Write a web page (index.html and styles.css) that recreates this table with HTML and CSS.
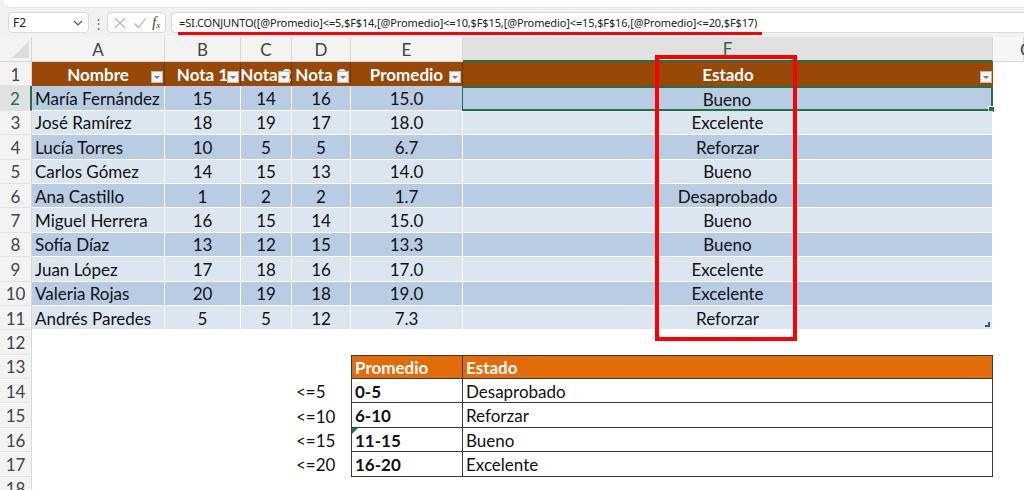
FILE: index.html
```html
<!DOCTYPE html>
<html lang="es">
<head>
<meta charset="utf-8">
<title>SI.CONJUNTO</title>
<link rel="stylesheet" href="styles.css">
</head>
<body>
<div class="app">
  <div class="ribbon-edge"></div>
  <div class="fbar">
    <div class="namebox"><span>F2</span><svg class="chev" width="10" height="6" viewBox="0 0 10 6"><path d="M1 1l4 4 4-4" fill="none" stroke="#555" stroke-width="1.2"/></svg></div>
    <div class="dots">⋮</div>
    <div class="fbtns">
      <svg width="14" height="14" viewBox="0 0 14 14"><path d="M2 2l10 10M12 2L2 12" stroke="#b4b4b4" stroke-width="1.2"/></svg>
      <svg width="14" height="14" viewBox="0 0 14 14"><path d="M1.5 7.5l4 4 7-9" fill="none" stroke="#b4b4b4" stroke-width="1.2"/></svg>
      <span class="fx">f<sub>x</sub></span>
    </div>
    <div class="formula">=SI.CONJUNTO([@Promedio]&lt;=5,$F$14,[@Promedio]&lt;=10,$F$15,[@Promedio]&lt;=15,$F$16,[@Promedio]&lt;=20,$F$17)</div>
    <div class="underline"></div>
  </div>

  <div class="sheet">
    <!-- column headers -->
    <div class="corner"><span class="tri"></span></div>
    <div class="ch">A</div><div class="ch">B</div><div class="ch">C</div><div class="ch">D</div><div class="ch">E</div><div class="ch sel">F</div><div class="ch gcol">G</div>

    <!-- row 1 -->
    <div class="rh">1</div>
    <div class="hd">Nombre<span class="dd"></span></div>
    <div class="hd">Nota 1<span class="dd"></span></div>
    <div class="hd">Nota 2<span class="dd"></span></div>
    <div class="hd">Nota 3<span class="dd"></span></div>
    <div class="hd">Promedio<span class="dd"></span></div>
    <div class="hd last-hd">Estado<span class="dd"></span></div>
    <div class="c"></div>

    <!-- row 2 -->
    <div class="rh rsel">2</div>
    <div class="t b1 l">María Fernández</div><div class="t b1">15</div><div class="t b1">14</div><div class="t b1">16</div><div class="t b1">15.0</div><div class="t b1 active">Bueno</div><div class="c"></div>

    <div class="rh">3</div>
    <div class="t b2 l">José Ramírez</div><div class="t b2">18</div><div class="t b2">19</div><div class="t b2">17</div><div class="t b2">18.0</div><div class="t b2">Excelente</div><div class="c"></div>

    <div class="rh">4</div>
    <div class="t b1 l">Lucía Torres</div><div class="t b1">10</div><div class="t b1">5</div><div class="t b1">5</div><div class="t b1">6.7</div><div class="t b1">Reforzar</div><div class="c"></div>

    <div class="rh">5</div>
    <div class="t b2 l">Carlos Gómez</div><div class="t b2">14</div><div class="t b2">15</div><div class="t b2">13</div><div class="t b2">14.0</div><div class="t b2">Bueno</div><div class="c"></div>

    <div class="rh">6</div>
    <div class="t b1 l">Ana Castillo</div><div class="t b1">1</div><div class="t b1">2</div><div class="t b1">2</div><div class="t b1">1.7</div><div class="t b1">Desaprobado</div><div class="c"></div>

    <div class="rh">7</div>
    <div class="t b2 l">Miguel Herrera</div><div class="t b2">16</div><div class="t b2">15</div><div class="t b2">14</div><div class="t b2">15.0</div><div class="t b2">Bueno</div><div class="c"></div>

    <div class="rh">8</div>
    <div class="t b1 l">Sofía Díaz</div><div class="t b1">13</div><div class="t b1">12</div><div class="t b1">15</div><div class="t b1">13.3</div><div class="t b1">Bueno</div><div class="c"></div>

    <div class="rh">9</div>
    <div class="t b2 l">Juan López</div><div class="t b2">17</div><div class="t b2">18</div><div class="t b2">16</div><div class="t b2">17.0</div><div class="t b2">Excelente</div><div class="c"></div>

    <div class="rh">10</div>
    <div class="t b1 l">Valeria Rojas</div><div class="t b1">20</div><div class="t b1">19</div><div class="t b1">18</div><div class="t b1">19.0</div><div class="t b1">Excelente</div><div class="c"></div>

    <div class="rh">11</div>
    <div class="t b2 l">Andrés Paredes</div><div class="t b2">5</div><div class="t b2">5</div><div class="t b2">12</div><div class="t b2">7.3</div><div class="t b2 last">Reforzar</div><div class="c"></div>

    <div class="rh">12</div>
    <div class="c"></div><div class="c"></div><div class="c"></div><div class="c"></div><div class="c"></div><div class="c"></div><div class="c"></div>

    <div class="rh">13</div>
    <div class="c"></div><div class="c"></div><div class="c"></div><div class="c"></div>
    <div class="k kh k1">Promedio</div><div class="k kh k2">Estado</div><div class="c"></div>

    <div class="rh">14</div>
    <div class="c"></div><div class="c"></div><div class="c"></div><div class="c lbl">&lt;=5</div>
    <div class="k k1 kb">0-5</div><div class="k k2">Desaprobado</div><div class="c"></div>

    <div class="rh">15</div>
    <div class="c"></div><div class="c"></div><div class="c"></div><div class="c lbl">&lt;=10</div>
    <div class="k k1 kb">6-10</div><div class="k k2">Reforzar</div><div class="c"></div>

    <div class="rh">16</div>
    <div class="c"></div><div class="c"></div><div class="c"></div><div class="c lbl">&lt;=15</div>
    <div class="k k1 kb err">11-15</div><div class="k k2">Bueno</div><div class="c"></div>

    <div class="rh">17</div>
    <div class="c"></div><div class="c"></div><div class="c"></div><div class="c lbl">&lt;=20</div>
    <div class="k k1 kb">16-20</div><div class="k k2">Excelente</div><div class="c"></div>

    <div class="rh">18</div>
    <div class="c"></div><div class="c"></div><div class="c"></div><div class="c"></div><div class="c"></div><div class="c"></div><div class="c"></div>

    <div class="redbox"></div>
  </div>
</div>
</body>
</html>
```

FILE: styles.css
```css
* { box-sizing: border-box; }
html, body { margin: 0; padding: 0; }
body {
  width: 1024px;
  height: 490px;
  overflow: hidden;
  background: #ffffff;
  font-family: Lato, "Liberation Sans", sans-serif;
  color: #111;
}
.app {
  position: relative;
  width: 1024px;
  height: 490px;
  overflow: hidden;
  background: #f1f1f1;
}

.ribbon-edge {
  height: 8px;
  margin-left: 4px;
  background: #ffffff;
  border-bottom-left-radius: 6px;
  border-bottom: 1px solid #e6e6e6;
}
.fbar {
  position: relative;
  z-index: 5;
  height: 29px;
  background: #f1f1f1;
  display: flex;
  align-items: center;
  padding: 2px 0 2px 8px;
  font-family: "Noto Sans", "Open Sans", sans-serif;
}
.namebox {
  width: 81px;
  height: 21px;
  background: #fff;
  border: 1px solid #dadada;
  border-radius: 4px;
  display: flex;
  align-items: center;
  justify-content: space-between;
  padding: 0 5px 0 4px;
  font-size: 12px;
  color: #222;
}
.dots { width: 18px; text-align: center; color: #777; font-size: 13px; }
.fbtns {
  width: 59px;
  height: 21px;
  background: #fff;
  border: 1px solid #dadada;
  border-radius: 4px;
  display: flex;
  align-items: center;
  justify-content: space-around;
  padding: 0 2px;
}
.fx { font-family: "Liberation Serif", serif; font-style: italic; font-size: 14px; color: #333; }
.fx sub { font-size: 9px; vertical-align: -1px; }
.formula {
  flex: 1;
  margin-left: 5px;
  height: 21px;
  background: #fff;
  border: 1px solid #dadada;
  border-right: none;
  border-radius: 4px 0 0 4px;
  font-size: 11px;
  letter-spacing: -0.13px;
  color: #222;
  line-height: 19px;
  padding-left: 7px;
  white-space: nowrap;
}
.underline {
  position: absolute;
  left: 178px;
  top: 24px;
  width: 584px;
  height: 3px;
  background: #ff0000;
}

.sheet {
  position: relative;
  display: grid;
  grid-template-columns: 32px 133px 76px 51px 59px 112px 530px 31px;
  grid-template-rows: 25px repeat(18, 24.4px);
  background: #fff;
}
.corner {
  position: relative;
  background: #f3f3f3;
  border-right: 1px solid #d8d8d8;
  border-bottom: 1px solid #d8d8d8;
}
.tri {
  position: absolute;
  right: 2px;
  bottom: 3px;
  width: 0; height: 0;
  border-left: 17px solid transparent;
  border-bottom: 17px solid #dcdcdc;
}
.ch {
  background: #f3f3f3;
  border-right: 1px solid #d8d8d8;
  border-bottom: 1px solid #d8d8d8;
  display: flex;
  align-items: center;
  justify-content: center;
  font-size: 17px;
  color: #444;
}
.ch.sel {
  background: #e1e1e1;
  color: #1f6a3e;
  border-bottom: 2px solid #217346;
}
.ch.gcol { justify-content: flex-start; padding-left: 27px; background: #f6f6f6; }
.rh {
  background: #f3f3f3;
  border-right: 1px solid #d8d8d8;
  border-bottom: 1px solid #e2e2e2;
  display: flex;
  align-items: center;
  justify-content: center;
  font-size: 17px;
  color: #444;
  padding-top: 1px;
}
.rh.rsel {
  background: #e1e1e1;
  color: #217346;
  border-right: 2px solid #217346;
}

.c { background: #fff; }

.hd {
  position: relative;
  background: #984807;
  color: #fff;
  font-weight: 700;
  font-size: 17px;
  display: flex;
  align-items: center;
  justify-content: center;
  white-space: nowrap;
  overflow: hidden;
  border-right: 1px solid #6e3405;
}
.hd.last-hd { border-right: none; }
.dd {
  position: absolute;
  right: 1px;
  bottom: 3px;
  width: 12px;
  height: 12px;
  background: #f4f4f4;
  border: 1px solid #b9b9b9;
}
.dd::after {
  content: "";
  position: absolute;
  left: 2px;
  top: 4px;
  border-left: 3px solid transparent;
  border-right: 3px solid transparent;
  border-top: 3px solid #7a7a7a;
}

.t {
  position: relative;
  display: flex;
  align-items: center;
  justify-content: center;
  font-size: 17px;
  color: #111;
  border-right: 1px solid #fff;
  border-bottom: 1px solid #fff;
  white-space: nowrap;
  padding-top: 1px;
}
.t.l { justify-content: flex-start; padding-left: 3px; }
.b1 { background: #b8cce4; }
.b2 { background: #dce6f1; }
.t.active {
  border: 2px solid #217346;
  border-left-width: 1px;
  margin-left: -1px;
}
.t.active::after {
  content: "";
  position: absolute;
  right: -4px;
  bottom: -4px;
  width: 5px;
  height: 5px;
  background: #217346;
  border: 1px solid #fff;
}
.t.last::after {
  content: "";
  position: absolute;
  right: 2px;
  bottom: 2px;
  width: 3px;
  height: 3px;
  border-right: 2px solid #3a4fa0;
  border-bottom: 2px solid #3a4fa0;
}

.lbl {
  display: flex;
  align-items: center;
  padding-left: 4px;
  font-size: 17px;
  padding-top: 1px;
}
.k {
  position: relative;
  display: flex;
  align-items: center;
  font-size: 17px;
  padding-left: 3px;
  padding-top: 1px;
  border-bottom: 1px solid #3a3a3a;
  border-right: 1px solid #3a3a3a;
  white-space: nowrap;
}
.k1 { border-left: 1px solid #3a3a3a; }
.kh {
  background: #e26b0a;
  color: #fff;
  font-weight: 700;
  border-top: 1px solid #3a3a3a;
}
.kb { font-weight: 700; }
.err::before {
  content: "";
  position: absolute;
  left: 0;
  top: 0;
  border-right: 6px solid transparent;
  border-top: 6px solid #1e7b34;
}

.redbox {
  position: absolute;
  left: 655px;
  top: 18px;
  width: 142px;
  height: 286px;
  border: 4px solid #ff0000;
  pointer-events: none;
}
```
